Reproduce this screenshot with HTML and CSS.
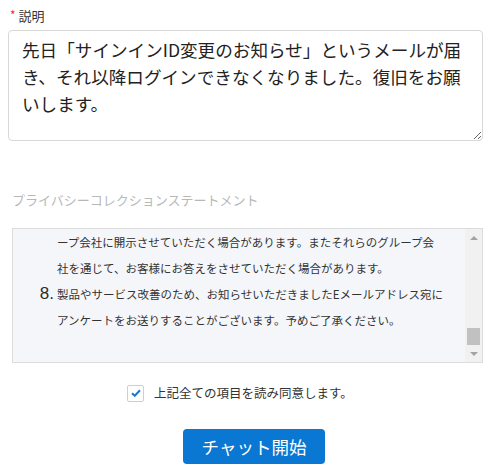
FILE: index.html
```html
<!DOCTYPE html>
<html lang="ja">
<head>
<meta charset="utf-8">
<link rel="stylesheet" href="styles.css">
</head>
<body>
<div class="page">
  <div class="label"><span class="req">*</span>説明</div>
  <textarea class="desc">先日「サインインID変更のお知らせ」というメールが届き、それ以降ログインできなくなりました。復旧をお願いします。</textarea>

  <div class="heading">プライバシーコレクションステートメント</div>
  <div class="privacy">
    <div class="content">
      <div class="item">
        <span class="num"></span>
        <div class="body">ープ会社に開示させていただく場合があります。またそれらのグループ会<br>社を通じて、お客様にお答えをさせていただく場合があります。</div>
      </div>
      <div class="item">
        <span class="num">8.</span>
        <div class="body">製品やサービス改善のため、お知らせいただきましたEメールアドレス宛に<br>アンケートをお送りすることがございます。予めご了承ください。</div>
      </div>
    </div>
    <div class="sb">
      <div class="sb-btn"><span class="arrow-up"></span></div>
      <div class="sb-track"><div class="sb-thumb"></div></div>
      <div class="sb-btn"><span class="arrow-down"></span></div>
    </div>
  </div>

  <label class="agree">
    <span class="check"><svg width="10" height="8" viewBox="0 0 10 8"><path d="M1 4.2 L3.8 6.8 L9 1.2" fill="none" stroke="#1b77d2" stroke-width="2"/></svg></span>
    <span class="agree-text">上記全ての項目を読み同意します。</span>
  </label>

  <div class="actions">
    <button class="start">チャット開始</button>
  </div>
</div>
</body>
</html>
```

FILE: styles.css
```css
html, body {
  margin: 0;
  background: #fff;
}
body {
  font-family: "Noto Sans CJK JP", "Noto Sans", sans-serif;
  color: #333;
  overflow: hidden;
}
.page {
  padding: 6px 20px 0 8px;
}
.label {
  font-size: 13px;
  line-height: 20px;
  height: 20px;
  margin-bottom: 4px;
  padding-left: 2px;
  color: #333;
}
.req {
  color: #e0332f;
  font-size: 12px;
  margin-right: 3px;
  position: relative;
  top: -1px;
}
.desc {
  display: block;
  box-sizing: border-box;
  width: 475px;
  height: 111px;
  margin: 0;
  border: 1px solid #d8d8d8;
  border-radius: 4px;
  padding: 5px 10px 0 13px;
  font-family: "Noto Sans CJK JP", "Noto Sans", sans-serif;
  font-size: 17.6px;
  line-height: 27px;
  color: #222;
  background: #fff;
  outline: none;
}
.heading {
  margin-top: 49px;
  margin-left: 4px;
  font-size: 13px;
  line-height: 20px;
  color: #b8b8b8;
}
.privacy {
  margin-top: 18px;
  margin-left: 4px;
  display: flex;
  box-sizing: border-box;
  height: 135px;
  border: 1px solid #dcdcdc;
  background: #f5f6fa;
}
.content {
  flex: 1;
  padding: 0 0 29px 0;
  font-size: 11.5px;
  line-height: 26px;
  color: #333;
  white-space: nowrap;
  overflow: hidden;
}
.item {
  display: flex;
  align-items: baseline;
}
.num {
  flex: 0 0 44px;
  box-sizing: border-box;
  padding-right: 3px;
  text-align: right;
  font-family: "Liberation Sans", Arial, sans-serif;
  font-size: 17px;
  line-height: 26px;
  color: #2a2a2a;
}
.sb {
  flex: 0 0 17px;
  display: flex;
  flex-direction: column;
  background: #f1f1f1;
}
.sb-btn {
  height: 17px;
  display: flex;
  align-items: center;
  justify-content: center;
}
.arrow-up {
  width: 0;
  height: 0;
  border-left: 4px solid transparent;
  border-right: 4px solid transparent;
  border-bottom: 4px solid #a3a3a3;
}
.arrow-down {
  width: 0;
  height: 0;
  border-left: 4px solid transparent;
  border-right: 4px solid transparent;
  border-top: 4px solid #a3a3a3;
}
.sb-track {
  flex: 1;
  display: flex;
  flex-direction: column;
  justify-content: flex-end;
}
.sb-thumb {
  height: 17px;
  margin: 0 2px;
  background: #c1c1c1;
}
.agree {
  margin-top: 20px;
  padding-left: 119px;
  display: flex;
  align-items: center;
  height: 20px;
  gap: 10px;
}
.check {
  box-sizing: border-box;
  width: 17px;
  height: 17px;
  border: 1px solid #cfcfcf;
  border-radius: 2px;
  background: #fff;
  display: flex;
  align-items: center;
  justify-content: center;
}
.agree-text {
  font-size: 12.5px;
  line-height: 20px;
  color: #333;
}
.actions {
  margin-top: 26px;
  padding-left: 175px;
}
.start {
  width: 142px;
  height: 35px;
  border: none;
  border-radius: 4px;
  background: #0a77d2;
  color: #fff;
  font-family: "Noto Sans CJK JP", "Noto Sans", sans-serif;
  font-size: 17.5px;
  line-height: 35px;
  padding: 0;
  cursor: pointer;
}
```
